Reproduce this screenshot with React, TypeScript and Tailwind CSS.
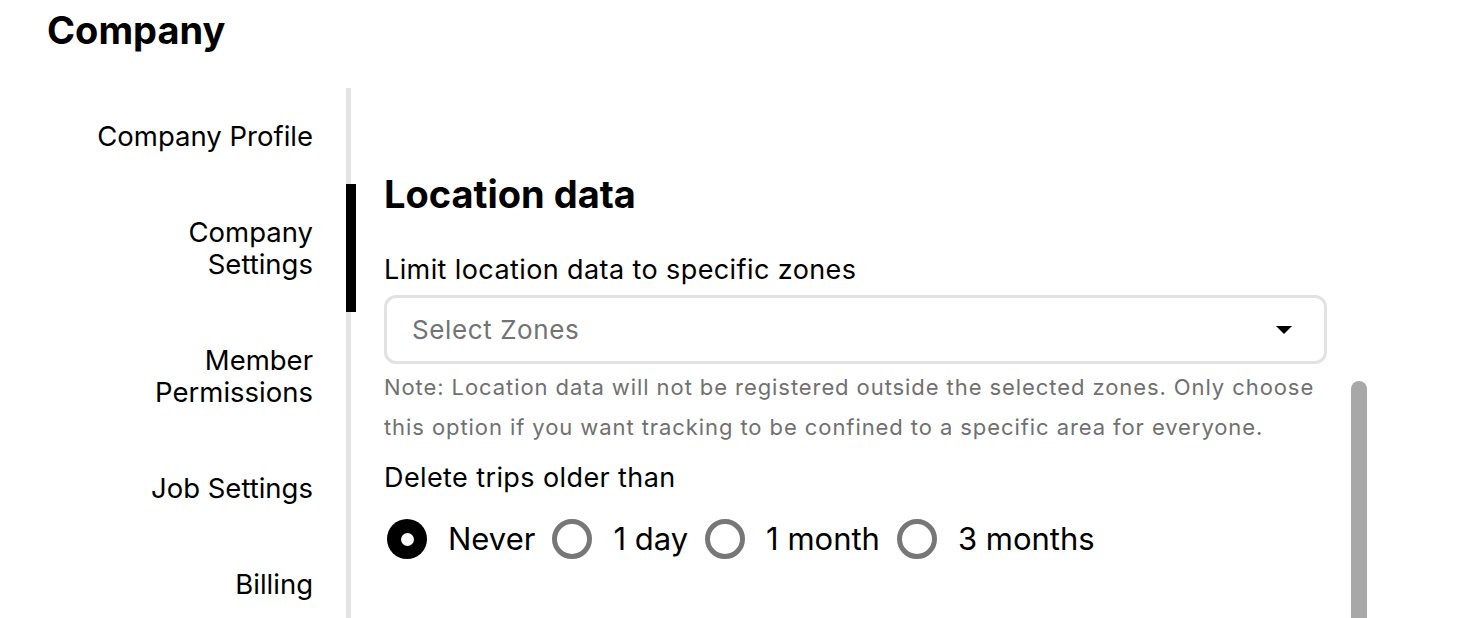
import { useState } from "react";

const NAV_ITEMS = [
  { id: "profile", label: ["Company Profile"] },
  { id: "settings", label: ["Company", "Settings"] },
  { id: "members", label: ["Member", "Permissions"] },
  { id: "jobs", label: ["Job Settings"] },
  { id: "billing", label: ["Billing"] },
];

const RETENTION = ["Never", "1 day", "1 month", "3 months"];

function Radio({ checked, label, onSelect }: { checked: boolean; label: string; onSelect: () => void }) {
  return (
    <button onClick={onSelect} className="flex items-center">
      {checked ? (
        <span className="flex h-[40px] w-[40px] items-center justify-center rounded-full bg-black">
          <span className="h-[13px] w-[13px] rounded-full bg-white" />
        </span>
      ) : (
        <span className="h-[40px] w-[40px] rounded-full border-[5px] border-[#777777]" />
      )}
      <span className="ml-[21px] mr-[17px] text-[31px] leading-[40px] text-black">{label}</span>
    </button>
  );
}

export default function App() {
  const [active] = useState("settings");
  const [retention, setRetention] = useState("Never");

  return (
    <div className="relative h-[618px] overflow-hidden bg-white font-['Inter',sans-serif] text-black">
      <h1 className="pl-[47px] pt-[11px] text-[38px] font-bold leading-[38px]">Company</h1>

      <div className="mt-[39px] flex">
        {/* Side nav */}
        <nav className="w-[351px] shrink-0 border-r-[5px] border-[#e3e3e3]">
          {NAV_ITEMS.map((item) => (
            <div key={item.id} className="relative py-8 pr-[33px] text-right text-[27.5px] leading-[32px]">
              {item.label.map((line) => (
                <div key={line}>{line}</div>
              ))}
              {active === item.id && <span className="absolute -right-[10px] top-0 h-full w-[10px] bg-black" />}
            </div>
          ))}
        </nav>

        {/* Content */}
        <main className="w-[976px] pl-[33px] pt-[83px]">
          <h2 className="text-[38px] font-bold leading-[46px]">Location data</h2>

          <p className="mt-[37px] text-[27px] leading-[32px] tracking-[0.4px]">Limit location data to specific zones</p>
          <button className="mt-[9px] flex h-[69px] w-full items-center justify-between rounded-[12px] border-[3px] border-[#e2e2e2] pl-[25px] pr-[32px]">
            <span className="text-[26px] tracking-[0.6px] text-[#737373]">Select Zones</span>
            <svg width="16" height="8" viewBox="0 0 16 8">
              <path d="M0 0h16L8 8z" fill="#000" />
            </svg>
          </button>
          <p className="mt-[3px] text-[22px] leading-[40px] tracking-[0.92px] text-[#707070]">
            Note: Location data will not be registered outside the selected zones. Only choose this option if you
            want tracking to be confined to a specific area for everyone.
          </p>

          <p className="mt-[15px] text-[27px] leading-[32px] tracking-[0.4px]">Delete trips older than</p>
          <div className="mt-[25px] flex items-center pl-[3px]">
            {RETENTION.map((opt) => (
              <Radio key={opt} label={opt} checked={retention === opt} onSelect={() => setRetention(opt)} />
            ))}
          </div>
        </main>
      </div>

      {/* scrollbar thumb */}
      <div className="absolute left-[1351px] top-[381px] h-[260px] w-[16px] rounded-full bg-[#a8a8a8]" />
    </div>
  );
}
